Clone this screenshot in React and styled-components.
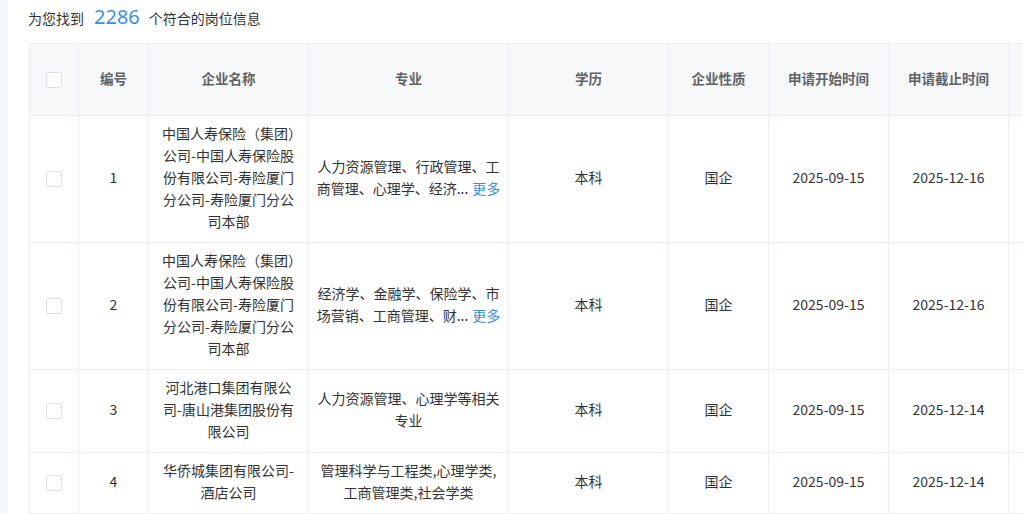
import React from 'react';
import styled, {createGlobalStyle} from 'styled-components';

const GlobalStyle = createGlobalStyle`
  html, body {
    margin: 0;
    padding: 0;
    background: #f4f7fc;
    overflow: hidden;
  }
  * {
    box-sizing: border-box;
  }
`;

const Page = styled.div`
  margin-left: 8px;
  min-height: 514px;
  background: #fff;
  padding-left: 21px;
  font-family: "Noto Sans CJK SC", "Noto Sans", sans-serif;
  color: #333;
  overflow: hidden;
`;

const Summary = styled.div`
  display: flex;
  align-items: center;
  height: 36px;
  font-size: 14px;
  color: #333;
  margin-left: -1px;
  margin-bottom: 7px;
`;

const Count = styled.span`
  font-size: 20px;
  color: #3b8fe3;
  margin: 0 9px 0 10px;
  position: relative;
  top: -2px;
  font-family: "Noto Sans", "Noto Sans CJK SC", sans-serif;
`;

const Table = styled.table`
  table-layout: fixed;
  border-collapse: separate;
  border-spacing: 0;
  width: 1100px;
  border-top: 1px solid #ebeef5;
  border-left: 1px solid #ebeef5;
  font-size: 14px;
`;

const HeadCell = styled.th`
  height: 72px;
  background: #f7f8fa;
  color: #606266;
  font-weight: bold;
  font-size: 13.5px;
  text-align: center;
  border-right: 1px solid #ebeef5;
  border-bottom: 1px solid #ebeef5;
  padding: 0 8px 3px;
`;

const Cell = styled.td`
  text-align: center;
  vertical-align: middle;
  line-height: 22px;
  padding: 6px ${p => (p.$wide ? 7 : 10)}px 10px;
  border-right: 1px solid #ebeef5;
  border-bottom: 1px solid #ebeef5;
  color: #333;
  word-break: break-all;
`;

const Check = styled.span`
  display: inline-block;
  width: 16px;
  height: 16px;
  border: 1px solid #dcdfe6;
  border-radius: 2px;
  background: #fff;
  vertical-align: middle;
`;

const More = styled.a`
  display: inline-block;
  color: #3b8fe3;
  cursor: pointer;
  margin-left: 4px;
  white-space: nowrap;
`;

const widths = [49, 70, 160, 200, 160, 100, 120, 120, 121];
const headers = ['', '编号', '企业名称', '专业', '学历', '企业性质', '申请开始时间', '申请截止时间', ''];

const rows = [
  {
    no: 1,
    name: '中国人寿保险（集团）公司-中国人寿保险股份有限公司-寿险厦门分公司-寿险厦门分公司本部',
    major: '人力资源管理、行政管理、工商管理、心理学、经济...',
    more: true,
    edu: '本科',
    type: '国企',
    start: '2025-09-15',
    end: '2025-12-16',
  },
  {
    no: 2,
    name: '中国人寿保险（集团）公司-中国人寿保险股份有限公司-寿险厦门分公司-寿险厦门分公司本部',
    major: '经济学、金融学、保险学、市场营销、工商管理、财...',
    more: true,
    edu: '本科',
    type: '国企',
    start: '2025-09-15',
    end: '2025-12-16',
  },
  {
    no: 3,
    name: '河北港口集团有限公司-唐山港集团股份有限公司',
    major: '人力资源管理、心理学等相关专业',
    edu: '本科',
    type: '国企',
    start: '2025-09-15',
    end: '2025-12-14',
  },
  {
    no: 4,
    name: '华侨城集团有限公司-酒店公司',
    major: '管理科学与工程类,心理学类,工商管理类,社会学类',
    edu: '本科',
    type: '国企',
    start: '2025-09-15',
    end: '2025-12-14',
  },
];

export default function App() {
  return (
    <>
      <GlobalStyle />
      <Page>
        <Summary>
          为您找到<Count>2286</Count>个符合的岗位信息
        </Summary>
        <Table>
          <colgroup>
            {widths.map((w, i) => (
              <col key={i} style={{width: w}} />
            ))}
          </colgroup>
          <thead>
            <tr>
              {headers.map((h, i) => (
                <HeadCell key={i}>{i === 0 ? <Check /> : h}</HeadCell>
              ))}
            </tr>
          </thead>
          <tbody>
            {rows.map(r => (
              <tr key={r.no}>
                <Cell><Check /></Cell>
                <Cell>{r.no}</Cell>
                <Cell>{r.name}</Cell>
                <Cell $wide>
                  {r.major}
                  {r.more && <More>更多</More>}
                </Cell>
                <Cell>{r.edu}</Cell>
                <Cell>{r.type}</Cell>
                <Cell>{r.start}</Cell>
                <Cell>{r.end}</Cell>
                <Cell />
              </tr>
            ))}
          </tbody>
        </Table>
      </Page>
    </>
  );
}
